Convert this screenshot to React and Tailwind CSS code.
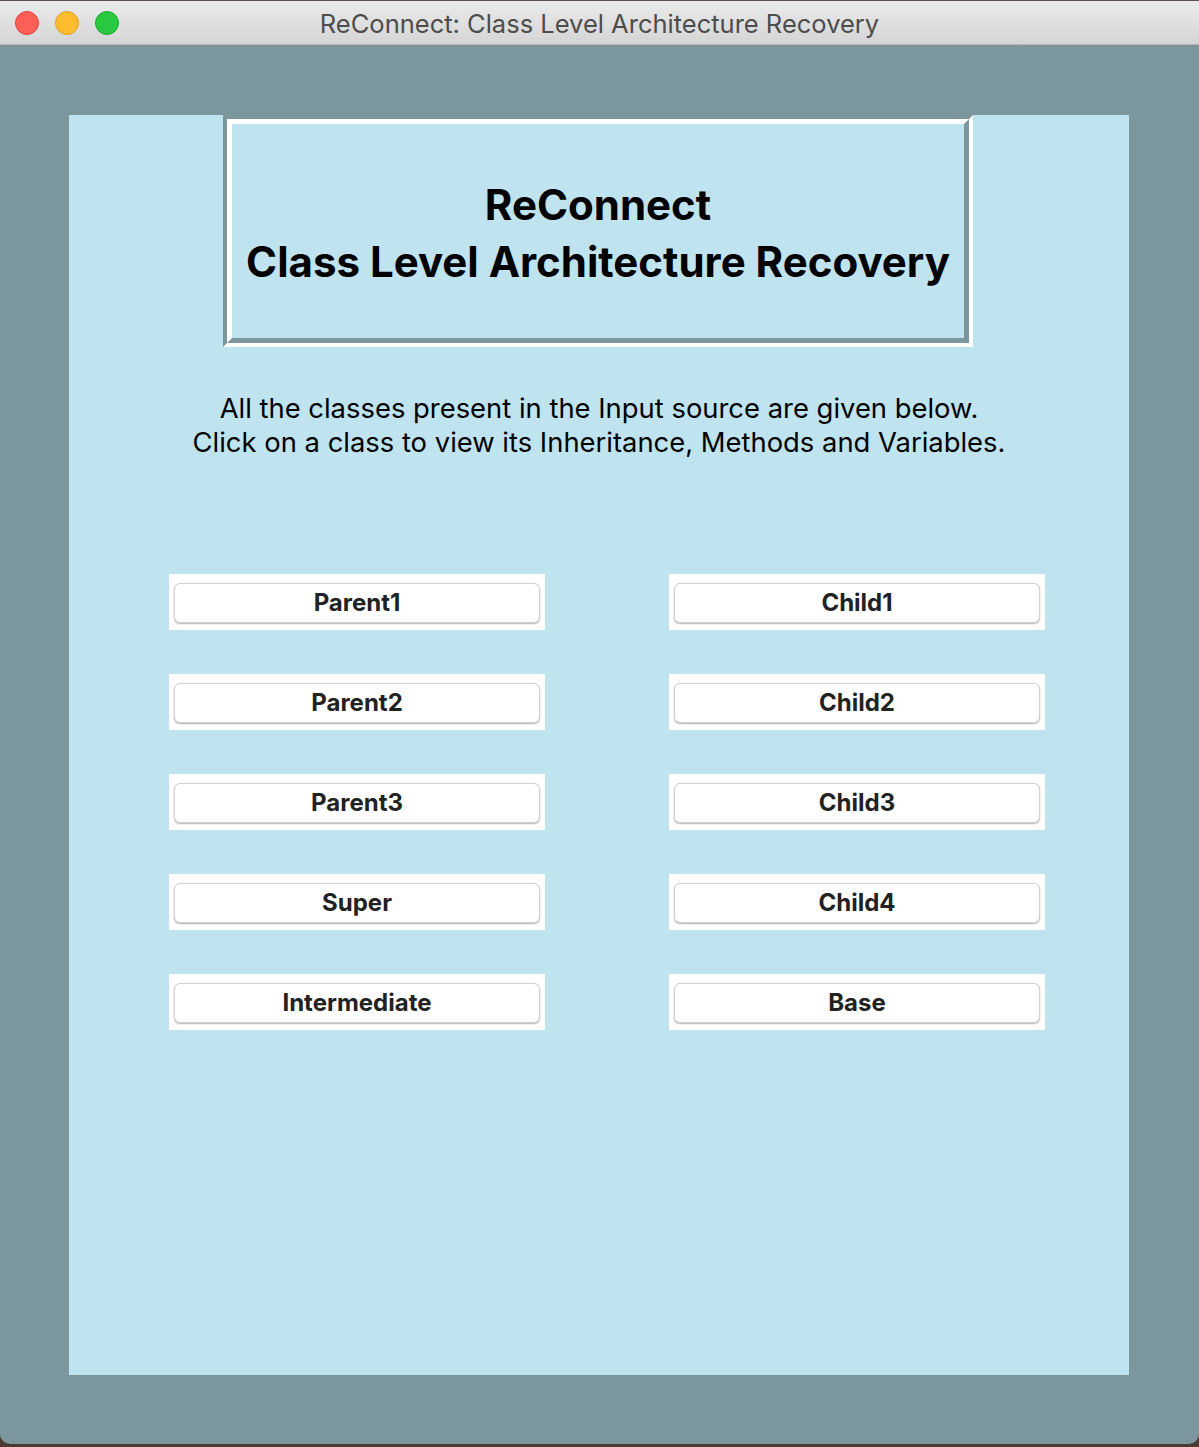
import React from "react";

const classes = [
    ["Parent1", "Child1"],
    ["Parent2", "Child2"],
    ["Parent3", "Child3"],
    ["Super", "Child4"],
    ["Intermediate", "Base"],
];

const ClassButton = ({ name }) => (
    <div className="bg-white w-[376px] h-[56px] pt-[9px] pb-[7px] px-[5px]">
        <button className="w-full h-full bg-white rounded-[6px] border border-[#d0d0d0] shadow-[0_1px_1.5px_rgba(0,0,0,0.3)] text-[24px] font-bold text-[#222222] leading-none">
            {name}
        </button>
    </div>
);

export default function App() {
    return (
        <div className="w-[1199px] h-[1447px] bg-[#4a3a30] font-['Inter','Noto_Sans',sans-serif]">
            <div className="w-full h-[1444px] rounded-b-[10px] overflow-hidden flex flex-col bg-[#7b969c]">
                {/* Title bar */}
                <div className="relative h-[45px] shrink-0 bg-gradient-to-b from-[#ebebeb] to-[#d5d5d5] border-t border-[#5a5050] border-b border-b-[#b5b5b5] flex items-center justify-center">
                    <div className="absolute left-[15px] top-[10px] flex gap-[16px]">
                        <span className="w-[24px] h-[24px] rounded-full bg-[#fe5f57] border border-[#e0443e]" />
                        <span className="w-[24px] h-[24px] rounded-full bg-[#febc2e] border border-[#dea123]" />
                        <span className="w-[24px] h-[24px] rounded-full bg-[#28c840] border border-[#1aab29]" />
                    </div>
                    <span className="text-[25.5px] text-[#4d4d4d] leading-none pt-[2px]">
                        ReConnect: Class Level Architecture Recovery
                    </span>
                </div>

                {/* Content */}
                <div className="flex-1 pt-[70px] pl-[69px]">
                    <div className="w-[1060px] h-[1260px] bg-[#bfe3ef] flex flex-col">
                        <div className="ml-[154px] w-[750px] h-[232px] border-[4px] border-t-[#7b969c] border-l-[#7b969c] border-r-white border-b-white">
                            <div className="w-full h-full border-[5px] border-t-white border-l-white border-r-[#7b969c] border-b-[#7b969c] flex flex-col items-center justify-center pt-[4px]">
                                <h1 className="text-[42px] font-bold text-black leading-[57px]">
                                    ReConnect
                                </h1>
                                <h1 className="text-[42px] font-bold text-black leading-[57px]">
                                    Class Level Architecture Recovery
                                </h1>
                            </div>
                        </div>

                        <div className="mt-[44px] text-center text-[27.4px] text-black leading-[34px]">
                            <p>All the classes present in the Input source are given below.</p>
                            <p>Click on a class to view its Inheritance, Methods and Variables.</p>
                        </div>

                        <div className="mt-[115px] ml-[100px] flex flex-col gap-[44px]">
                            {classes.map(([left, right]) => (
                                <div key={left} className="flex gap-[124px]">
                                    <ClassButton name={left} />
                                    <ClassButton name={right} />
                                </div>
                            ))}
                        </div>
                    </div>
                </div>
            </div>
        </div>
    );
}
